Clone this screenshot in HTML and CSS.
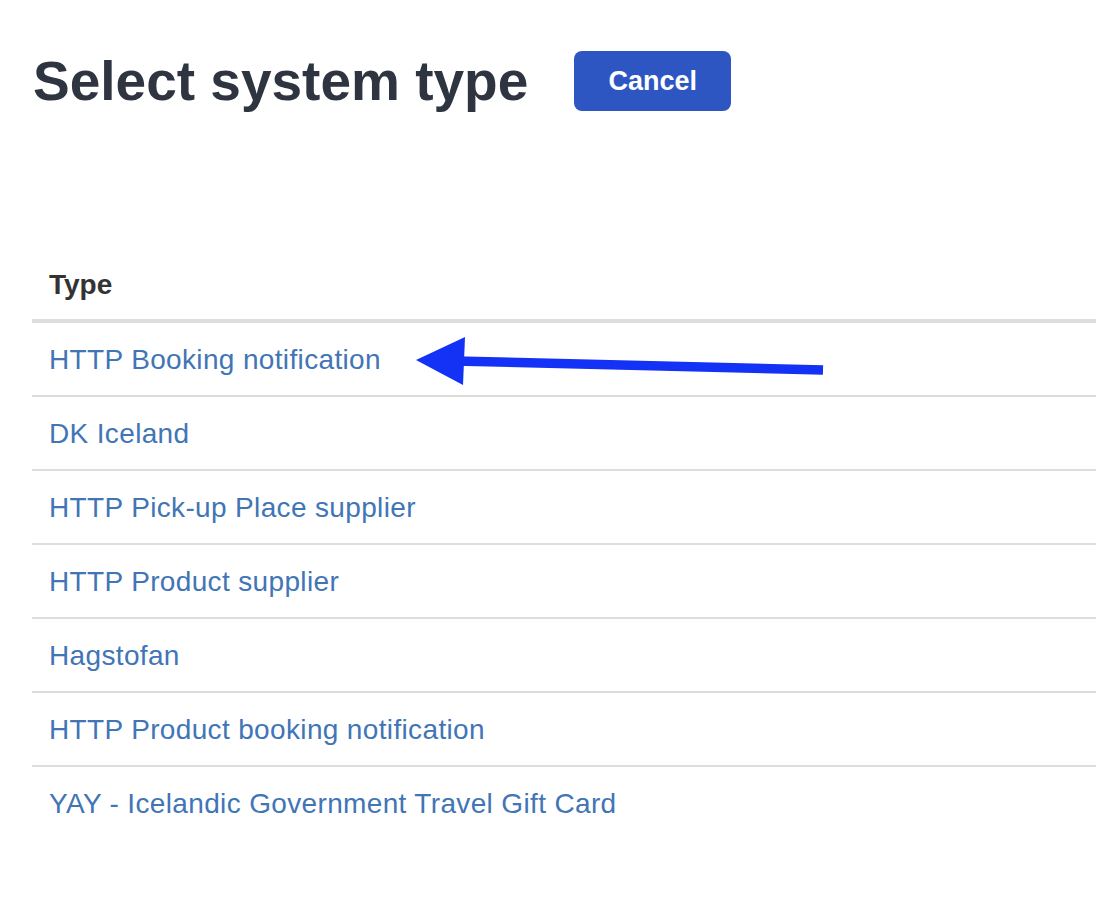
FILE: index.html
```html
<!DOCTYPE html>
<html lang="en">
<head>
<meta charset="utf-8">
<title>Select system type</title>
<link rel="stylesheet" href="styles.css">
</head>
<body>
<div class="page">
  <div class="page-header">
    <h1 class="title">Select system type</h1>
    <button class="btn-cancel" type="button">Cancel</button>
  </div>
  <table class="types">
    <thead>
      <tr><th>Type</th></tr>
    </thead>
    <tbody>
      <tr><td><a href="#">HTTP Booking notification</a></td></tr>
      <tr><td><a href="#">DK Iceland</a></td></tr>
      <tr><td><a href="#">HTTP Pick-up Place supplier</a></td></tr>
      <tr><td><a href="#">HTTP Product supplier</a></td></tr>
      <tr><td><a href="#">Hagstofan</a></td></tr>
      <tr><td><a href="#">HTTP Product booking notification</a></td></tr>
      <tr><td><a href="#">YAY - Icelandic Government Travel Gift Card</a></td></tr>
    </tbody>
  </table>
</div>
<svg class="annotation-arrow" width="1096" height="898" viewBox="0 0 1096 898" aria-hidden="true">
  <line x1="823" y1="370" x2="455" y2="361" stroke="#1432f5" stroke-width="9.5"/>
  <polygon points="416,360 465,337 463,385" fill="#1432f5"/>
</svg>
</body>
</html>
```

FILE: styles.css
```css
html, body {
  margin: 0;
  padding: 0;
  background: #ffffff;
}

body {
  font-family: "Liberation Sans", Arial, sans-serif;
  overflow: hidden;
}

.page {
  padding: 51px 0 0 32px;
}

.page-header {
  display: flex;
  align-items: center;
  gap: 46px;
  height: 60px;
}

.title {
  margin: 0;
  padding-left: 1px;
  font-size: 55px;
  font-weight: 700;
  color: #2f3441;
  line-height: 60px;
}

.btn-cancel {
  width: 157px;
  height: 60px;
  border: none;
  border-radius: 8px;
  background: #2e56c3;
  color: #ffffff;
  font-family: "Liberation Sans", Arial, sans-serif;
  font-size: 27px;
  font-weight: 700;
  padding: 0;
  cursor: pointer;
}

.types {
  margin-top: 136px;
  width: 100%;
  border-collapse: collapse;
}

.types th,
.types td {
  text-align: left;
  padding: 17px 16px 15px 17px;
  line-height: 40px;
  font-size: 28px;
}

.types th {
  padding-top: 18px;
  padding-bottom: 14px;
  font-weight: 700;
  color: #333333;
  border-bottom: 4px solid #dddddd;
}

.types td {
  border-top: 2px solid #dddddd;
  letter-spacing: 0.35px;
}

.types tbody tr:first-child td {
  border-top: 4px solid #dddddd;
}

.types a {
  color: #4175b6;
  text-decoration: none;
}

.annotation-arrow {
  position: absolute;
  left: 0;
  top: 0;
  pointer-events: none;
}
```
